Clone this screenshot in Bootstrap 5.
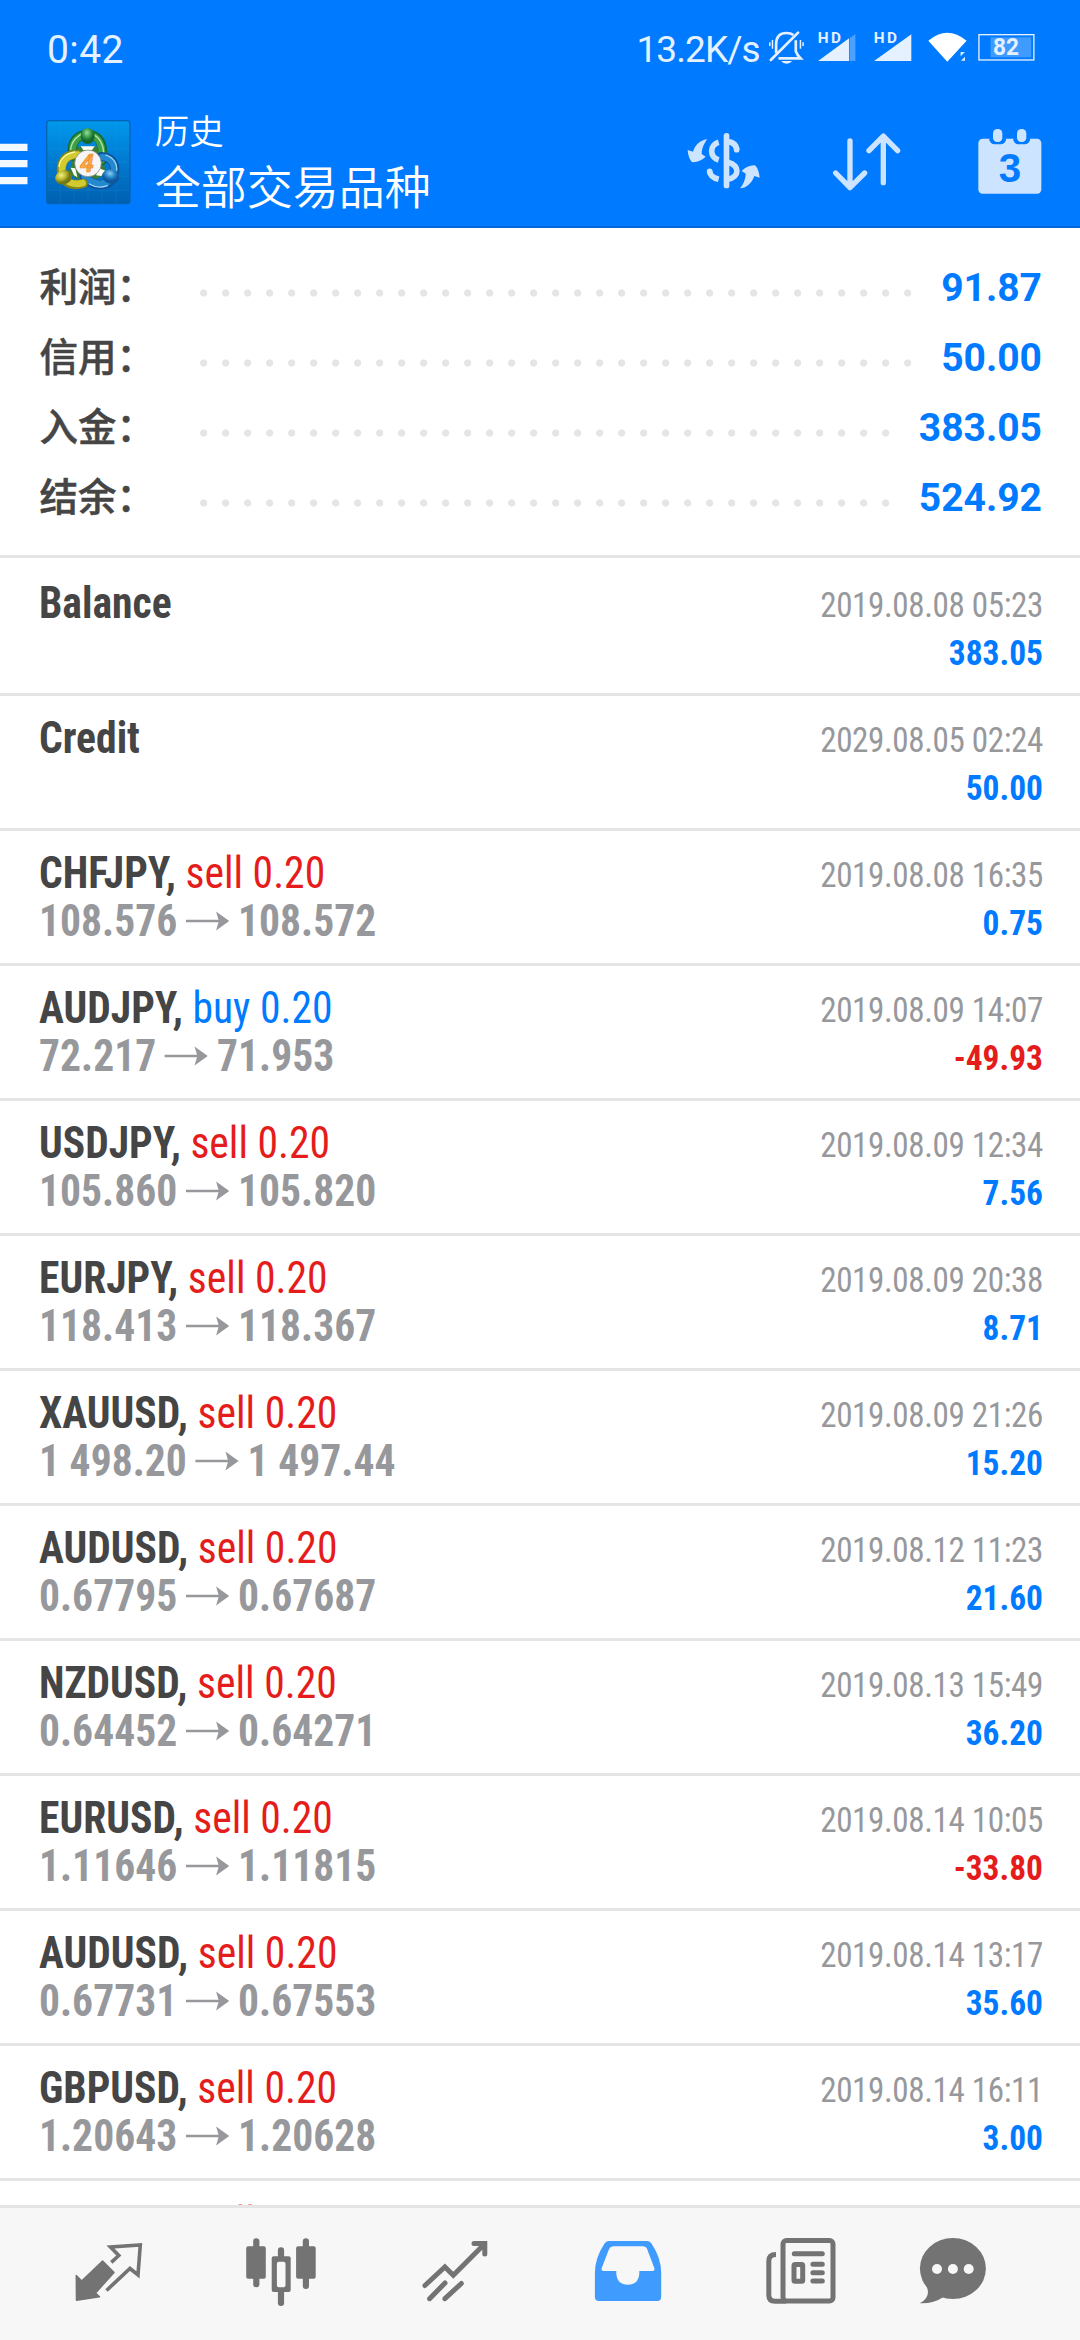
<!DOCTYPE html>
<html lang="zh-CN">
<head>
<meta charset="utf-8">
<meta name="viewport" content="width=device-width, initial-scale=1">
<title>历史</title>
<link href="https://cdn.jsdelivr.net/npm/bootstrap@5.3.0/dist/css/bootstrap.min.css" rel="stylesheet">
<script src="https://cdn.jsdelivr.net/npm/bootstrap@5.3.0/dist/js/bootstrap.bundle.min.js"></script>
<style>
:root{--mt-blue:#007aff;--mt-red:#e51c1c;--mt-line:#e5e5e5;--mt-dark:#454545;--mt-gray:#97989c}
body{width:1080px;height:2340px;background:#fff;font-family:Roboto,"Noto Sans CJK SC",sans-serif}
svg{display:block;flex:none}
.app-head{height:228px;background:var(--mt-blue);border-bottom:2px solid #0068da;color:#fff}
.status-bar{height:100px;padding:27px 44.5px 0 47px;color:#e5f1ff;line-height:46px}
.status-icons{margin-top:1px}
.clock{font-size:39px;letter-spacing:.4px}
.speed{font-size:37px;letter-spacing:-.9px;font-weight:370;margin-right:8px}
.tool-bar{height:126px}
.menu-icon{margin-top:38px}
.app-logo{margin:19px 0 0 17px}
.titles{margin-left:23px;font-family:"Noto Sans CJK SC",sans-serif;font-weight:350;padding-top:8.5px}
.title-top{font-size:34.5px;line-height:40px}
.title-sub{font-size:46px;line-height:56px;margin-top:7px}
.tools{padding:26.7px 35px 0 0}
.icon-sort{margin-left:65.5px}
.icon-date{margin-left:71.4px}
.summary{height:330px;padding:24px 38px 0 39.5px;border-bottom:3px solid var(--mt-line)}
.sum-row{height:70px}
.sum-label{width:160.5px;font:500 38.5px/64px "Noto Sans CJK SC",sans-serif;color:var(--mt-dark);-webkit-text-stroke:.5px var(--mt-dark)}
.dots{margin:37px 25px 0 0;height:15px;background:radial-gradient(circle 3.9px at 3.7px 4px,#e5e5e5 85%,transparent 100%) 0 0/22px 15px repeat-x}
.sum-value{font-size:39px;font-weight:700;line-height:73px;color:var(--mt-blue)}
.deals{height:1647px;font-family:"Roboto Condensed",Roboto,sans-serif;color:var(--mt-dark)}
.deal{height:135px;border-bottom:3px solid var(--mt-line);padding:17px 37.5px 0 39px;flex:none}
.deal:first-child{height:138px;padding-top:20px}
.deal-main{padding-top:1px;font-size:44.5px;line-height:48px;white-space:nowrap;transform:scaleX(.935);transform-origin:left}
.quote{color:var(--mt-gray)}
.quote svg{margin:0 9px}
.deal-side{padding-top:3px;line-height:48px;transform:scaleX(.94);transform-origin:right}
.stamp{font-size:35.2px;letter-spacing:-.4px;color:var(--mt-gray)}
.amount{font-size:35.5px}
.up{color:var(--mt-blue)}
.down{color:var(--mt-red)}
.tabs-bar{height:135px;border-top:3px solid var(--mt-line);background:#f7f7f7;padding:28px 0 0 21.5px;color:#737373}
.tab-cell{width:173.3px}
.tab-cell:last-child{width:131px}
</style>
</head>
<body class="d-flex flex-column overflow-hidden m-0">
<svg width="0" height="0" class="position-absolute"><defs><symbol id="arr" viewBox="0 0 45 20" preserveAspectRatio="none"><path d="M0 8.7H33.5L31 .5L44.5 10L31 19.500L33.5 11.300H0Z" fill="#97989c"/></symbol></defs></svg>

<header class="app-head flex-shrink-0">
  <div class="status-bar d-flex align-items-start">
    <span class="clock me-auto">0:42</span>
    <span class="speed">13.2K/s</span>
    <svg class="status-icons" width="267.700" height="38.300" viewBox="500 85 803 115" font-family="Roboto" font-weight="700" fill="#e5f1ff">
      <g fill="none" stroke="#e5f1ff" stroke-width="8">
        <path d="M524 160V134Q524 100 555 100Q568 100 576 106M583 122V155Q588 168 597 176H531" />
        <path d="M508 181L590 99" stroke-linecap="round"/>
        <path d="M505 128V139M513 121V147M597 121V147M605 128V139" stroke-width="4.500"/>
      </g>
      <path d="M539 184H572Q566 192 555.500 192Q545 192 539 184Z"/>
      <text x="649" y="129" font-size="46" textLength="70">HD</text>
      <path d="M650 184L743 116V184Z"/><path d="M745 115L762 103V184H745Z" fill="#4ba1ff"/>
      <text x="817" y="129" font-size="46" textLength="70">HD</text>
      <path d="M818 184L930 104V184Z"/>
      <path d="M981 123Q1038 75 1096 123L1038 186Z" fill="#fff"/>
      <path d="M1078 157H1091L1078 170ZM1091 171V183H1079Z"/>
      <rect x="1133" y="105" width="165" height="76" fill="none" stroke="#e5f1ff" stroke-width="4"/>
      <rect x="1168" y="113" width="122" height="60" fill="#409bff"/>
      <text x="1214" y="167" font-size="73" text-anchor="middle" textLength="78" lengthAdjust="spacingAndGlyphs">82</text>
    </svg>
  </div>
  <div class="tool-bar d-flex align-items-start">
    <svg class="menu-icon" width="28" height="50" viewBox="0 0 28 50" fill="#f2f8ff"><path d="M0 5.700H27.500V13H0ZM0 22H27.500V29.300H0ZM0 39H27.500V46.200H0Z"/></svg>
    <svg class="app-logo" width="86.700" height="86.700" viewBox="45 57 260 260">
      <defs>
        <linearGradient id="bg" x2="0" y2="1"><stop stop-color="#0098ec"/><stop offset=".5" stop-color="#007ad0"/><stop offset="1" stop-color="#0060b0"/></linearGradient>
        <radialGradient id="gg" cx=".45" cy=".3"><stop stop-color="#9ddc9f"/><stop offset=".6" stop-color="#369a4a"/><stop offset="1" stop-color="#14682b"/></radialGradient>
        <radialGradient id="yg" cx=".4" cy=".3"><stop stop-color="#f3f08a"/><stop offset=".6" stop-color="#b9b72b"/><stop offset="1" stop-color="#73781a"/></radialGradient>
        <radialGradient id="bb" cx=".4" cy=".3"><stop stop-color="#8ccdf5"/><stop offset=".6" stop-color="#2484cb"/><stop offset="1" stop-color="#0d579a"/></radialGradient>
      </defs>
      <rect x="50" y="62" width="250" height="249" rx="9" fill="url(#bg)" stroke="#0562b5" stroke-width="4"/>
      <path d="M91 64V309M132 64V309M174 64V309M216 64V309M258 64V309M52 103H298M52 145H298M52 187H298M52 229H298M52 271H298" stroke="#3fb4f4" stroke-opacity=".22" stroke-width="1.500"/>
      <path d="M140 140H210L228 222L200 236L150 240L116 222Z" fill="#3b7f35"/>
      <path d="M122 203L136 205L142 232L132 226ZM208 205L226 212L214 228L198 226ZM152 139H194L186 150H160Z" fill="#fbfdf5"/>
      <g fill="none" stroke-linecap="round">
        <path d="M129 168C119 126 144 103 173 103C205 104 224 130 216 182" stroke="#166a2d" stroke-width="28"/>
        <path d="M129 166C121 127 145 104 173 104C203 105 221 131 215 180" stroke="#3da048" stroke-width="21"/>
        <path d="M122 148C125 122 145 104 163 99M190 104C208 112 220 134 221 158" stroke="#b5e3a8" stroke-width="4"/>
        <path d="M214 170C250 172 259 198 252 224C241 262 192 264 162 229" stroke="#0d529a" stroke-width="28"/>
        <path d="M217 171C249 174 257 199 250 224C240 258 194 261 164 230" stroke="#2389ce" stroke-width="20"/>
        <path d="M228 165C252 173 262 192 260 210M178 252Q204 268 232 257" stroke="#96d4f5" stroke-width="4"/>
        <path d="M142 164C108 163 94 181 94 211C94 248 128 260 160 250" stroke="#858619" stroke-width="28"/>
        <path d="M142 164C109 165 96 183 96 211C97 244 128 257 158 249" stroke="#d2cb30" stroke-width="20"/>
        <path d="M87 200C89 178 107 160 134 156" stroke="#fbf8a0" stroke-width="4"/>
      </g>
      <ellipse cx="173" cy="108" rx="21" ry="24" fill="url(#gg)"/>
      <ellipse cx="101" cy="232" rx="26" ry="21" transform="rotate(-20 101 232)" fill="url(#yg)"/>
      <ellipse cx="242" cy="230" rx="26" ry="21" transform="rotate(20 242 230)" fill="url(#bb)"/>
      <circle cx="174" cy="190" r="40" fill="#f5f5f8" stroke="#777c70" stroke-width="2"/>
      <text x="171" y="215" font-family="Roboto" font-weight="700" font-style="italic" font-size="75" text-anchor="middle" fill="#fbaa48" stroke="#ef8a26" stroke-width="2">4</text>
    </svg>
    <div class="titles me-auto">
      <div class="title-top">历史</div>
      <div class="title-sub">全部交易品种</div>
    </div>
    <div class="tools d-flex">
      <svg width="80" height="70" viewBox="70 50 240 210" fill="#cce4ff">
        <rect x="186" y="68" width="17" height="166" rx="8"/>
        <g fill="none" stroke="#cce4ff" stroke-width="17">
          <path d="M198 94Q223 97 225 117" /><path d="M225 116V118" stroke-linecap="round"/>
          <path d="M198 156C235 166 235 200 198 206.500"/>
          <path d="M171 96C143 104 143 140 171 149"/>
          <path d="M144 184Q146 201 171 207"/><path d="M144 183V184" stroke-linecap="round"/>
        </g>
        <path id="swp" d="M137 87C120 88 102 100 94 124L78 119C79 135 85 150 92 156C105 156 120 151 132 139L120 131C120 115 128 97 137 87Z"/>
        <use href="#swp" transform="rotate(180 186 160.500)"/>
      </svg>
      <svg class="icon-sort" width="73.300" height="70" viewBox="505 50 220 210" fill="none" stroke="#cce4ff" stroke-width="16" stroke-linecap="round" stroke-linejoin="round"><path d="M565 92V230M522 188L565 232L609 188M665 217V80M622 121L665 77L708 121"/></svg>
      <svg class="icon-date" width="70" height="70" viewBox="940 50 210 210">
        <rect x="950" y="85" width="189" height="165" rx="13" fill="#cce4ff"/>
        <path d="M983 84H1033V90Q1028 102 1018 102H998Q988 102 983 90ZM1055 84H1105V90Q1100 102 1090 102H1070Q1060 102 1055 90Z" fill="#007aff"/>
        <rect x="994" y="56" width="28" height="39" rx="13" fill="#cce4ff"/><rect x="1066" y="56" width="28" height="39" rx="13" fill="#cce4ff"/>
        <text x="1045" y="216" font-family="Liberation Sans" font-weight="700" font-size="121" text-anchor="middle" fill="#007aff">3</text>
      </svg>
    </div>
  </div>
</header>

<section class="summary flex-shrink-0">
  <div class="sum-row d-flex"><div class="sum-label">利润：</div><div class="dots flex-grow-1"></div><div class="sum-value">91.87</div></div>
  <div class="sum-row d-flex"><div class="sum-label">信用：</div><div class="dots flex-grow-1"></div><div class="sum-value">50.00</div></div>
  <div class="sum-row d-flex"><div class="sum-label">入金：</div><div class="dots flex-grow-1"></div><div class="sum-value">383.05</div></div>
  <div class="sum-row d-flex"><div class="sum-label">结余：</div><div class="dots flex-grow-1"></div><div class="sum-value">524.92</div></div>
</section>

<main class="deals d-flex flex-column overflow-hidden flex-shrink-0">
  <div class="deal d-flex justify-content-between"><div class="deal-main"><b>Balance</b></div><div class="deal-side text-end"><div class="stamp">2019.08.08 05:23</div><b class="amount up">383.05</b></div></div>
  <div class="deal d-flex justify-content-between"><div class="deal-main"><b>Credit</b></div><div class="deal-side text-end"><div class="stamp">2029.08.05 02:24</div><b class="amount up">50.00</b></div></div>
  <div class="deal d-flex justify-content-between"><div class="deal-main"><b>CHFJPY,</b> <span class="down">sell 0.20</span><div class="quote d-flex align-items-center fw-bold">108.576<svg width="47" height="20"><use href="#arr"/></svg>108.572</div></div><div class="deal-side text-end"><div class="stamp">2019.08.08 16:35</div><b class="amount up">0.75</b></div></div>
  <div class="deal d-flex justify-content-between"><div class="deal-main"><b>AUDJPY,</b> <span class="up">buy 0.20</span><div class="quote d-flex align-items-center fw-bold">72.217<svg width="47" height="20"><use href="#arr"/></svg>71.953</div></div><div class="deal-side text-end"><div class="stamp">2019.08.09 14:07</div><b class="amount down">-49.93</b></div></div>
  <div class="deal d-flex justify-content-between"><div class="deal-main"><b>USDJPY,</b> <span class="down">sell 0.20</span><div class="quote d-flex align-items-center fw-bold">105.860<svg width="47" height="20"><use href="#arr"/></svg>105.820</div></div><div class="deal-side text-end"><div class="stamp">2019.08.09 12:34</div><b class="amount up">7.56</b></div></div>
  <div class="deal d-flex justify-content-between"><div class="deal-main"><b>EURJPY,</b> <span class="down">sell 0.20</span><div class="quote d-flex align-items-center fw-bold">118.413<svg width="47" height="20"><use href="#arr"/></svg>118.367</div></div><div class="deal-side text-end"><div class="stamp">2019.08.09 20:38</div><b class="amount up">8.71</b></div></div>
  <div class="deal d-flex justify-content-between"><div class="deal-main"><b>XAUUSD,</b> <span class="down">sell 0.20</span><div class="quote d-flex align-items-center fw-bold">1 498.20<svg width="47" height="20"><use href="#arr"/></svg>1 497.44</div></div><div class="deal-side text-end"><div class="stamp">2019.08.09 21:26</div><b class="amount up">15.20</b></div></div>
  <div class="deal d-flex justify-content-between"><div class="deal-main"><b>AUDUSD,</b> <span class="down">sell 0.20</span><div class="quote d-flex align-items-center fw-bold">0.67795<svg width="47" height="20"><use href="#arr"/></svg>0.67687</div></div><div class="deal-side text-end"><div class="stamp">2019.08.12 11:23</div><b class="amount up">21.60</b></div></div>
  <div class="deal d-flex justify-content-between"><div class="deal-main"><b>NZDUSD,</b> <span class="down">sell 0.20</span><div class="quote d-flex align-items-center fw-bold">0.64452<svg width="47" height="20"><use href="#arr"/></svg>0.64271</div></div><div class="deal-side text-end"><div class="stamp">2019.08.13 15:49</div><b class="amount up">36.20</b></div></div>
  <div class="deal d-flex justify-content-between"><div class="deal-main"><b>EURUSD,</b> <span class="down">sell 0.20</span><div class="quote d-flex align-items-center fw-bold">1.11646<svg width="47" height="20"><use href="#arr"/></svg>1.11815</div></div><div class="deal-side text-end"><div class="stamp">2019.08.14 10:05</div><b class="amount down">-33.80</b></div></div>
  <div class="deal d-flex justify-content-between"><div class="deal-main"><b>AUDUSD,</b> <span class="down">sell 0.20</span><div class="quote d-flex align-items-center fw-bold">0.67731<svg width="47" height="20"><use href="#arr"/></svg>0.67553</div></div><div class="deal-side text-end"><div class="stamp">2019.08.14 13:17</div><b class="amount up">35.60</b></div></div>
  <div class="deal d-flex justify-content-between"><div class="deal-main"><b>GBPUSD,</b> <span class="down">sell 0.20</span><div class="quote d-flex align-items-center fw-bold">1.20643<svg width="47" height="20"><use href="#arr"/></svg>1.20628</div></div><div class="deal-side text-end"><div class="stamp">2019.08.14 16:11</div><b class="amount up">3.00</b></div></div>
  <div class="deal d-flex justify-content-between"><div class="deal-main"><b>GBPUSD,</b> <span class="down">sell 0.20</span></div></div>
</main>

<nav class="tabs-bar d-flex flex-shrink-0">
  <div class="tab-cell d-flex justify-content-center"><svg width="72" height="72" viewBox="72 2236 72 72">
    <path d="M102.600 2261L114 2272.600L95.500 2293L99.500 2296.800L76.500 2300.200L76.300 2275.500L81.700 2281Z" fill="#737373" stroke="#737373" stroke-width="1.500" stroke-linejoin="round"/>
    <path d="M106.500 2290.500L130 2268.500L138 2275L140.300 2245L110.500 2247L118.800 2255.500L111.300 2262.300" fill="none" stroke="#737373" stroke-width="3.600"/></svg></div>
  <div class="tab-cell d-flex justify-content-center"><svg width="72" height="72" viewBox="245 2236 72 72" fill="#737373">
    <rect x="246.200" y="2246.300" width="19.600" height="32.400" rx="2"/><rect x="253.200" y="2238.300" width="6.200" height="49" rx="3"/>
    <rect x="296.100" y="2246.300" width="19.600" height="32.400" rx="2"/><rect x="302.800" y="2238.300" width="6.200" height="50.700" rx="3"/>
    <rect x="277.900" y="2247.300" width="6.200" height="58.700" rx="3"/><rect x="271.700" y="2256.300" width="19" height="35.700" rx="2"/><rect x="276.900" y="2261.700" width="8.600" height="25.600" rx="2" fill="#f7f7f7"/></svg></div>
  <div class="tab-cell d-flex justify-content-center"><svg width="72" height="72" viewBox="418 2236 72 72" fill="none" stroke="#737373" stroke-width="5" stroke-linecap="round">
    <path d="M423.900 2285.500L443.900 2267L452.300 2275.200L483.500 2244M473 2243.600H483.800V2254"/><path d="M428.600 2298.700L444 2283M443.900 2298.700L460.300 2283.500"/></svg></div>
  <div class="tab-cell d-flex justify-content-center"><svg width="72" height="72" viewBox="591.500 2236 72 72" fill="#409bff">
    <path fill-rule="evenodd" d="M608 2241H647Q649.500 2241 651 2243.500Q660.700 2258 660.700 2273V2297Q660.700 2301 656.700 2301H598.400Q594.400 2301 594.400 2297V2273Q594.400 2258 604 2243.500Q605.500 2241 608 2241ZM613 2246.300Q609.800 2246.300 608.600 2249L601.200 2268Q600.400 2271 603 2271H615.800V2273.500Q616.500 2284.700 627.300 2284.700Q638.100 2284.700 638.800 2273.500V2271H652Q654.800 2271 653.800 2268L646.600 2249Q645.500 2246.300 642.300 2246.300Z"/></svg></div>
  <div class="tab-cell d-flex justify-content-center"><svg width="72" height="72" viewBox="765 2236 72 72" fill="none" stroke="#737373" stroke-width="5">
    <rect x="783" y="2240.500" width="50" height="60.600" rx="3.500"/><path d="M776 2254.500Q768.800 2254.500 768.800 2261V2295Q768.800 2301.200 775 2301.200H786"/>
    <path d="M794.300 2253.700H822.300M812.900 2264.300H822.300M812.900 2272.700H822.300M812.900 2281H822.300" stroke-linecap="round"/><rect x="794" y="2264.500" width="8.700" height="16.700" rx="1"/></svg></div>
  <div class="tab-cell d-flex justify-content-center"><svg width="72" height="72" viewBox="917 2236 72 72" fill="#737373">
    <ellipse cx="952.900" cy="2268.500" rx="33" ry="30.500"/><path d="M926 2285Q932 2297 919.800 2303.300Q933 2304 943.500 2297L945 2290Z"/><g fill="#f7f7f7"><circle cx="937" cy="2269" r="5"/><circle cx="952.900" cy="2269" r="5"/><circle cx="968.700" cy="2269" r="5"/></g></svg></div>
</nav>
</body>
</html>
